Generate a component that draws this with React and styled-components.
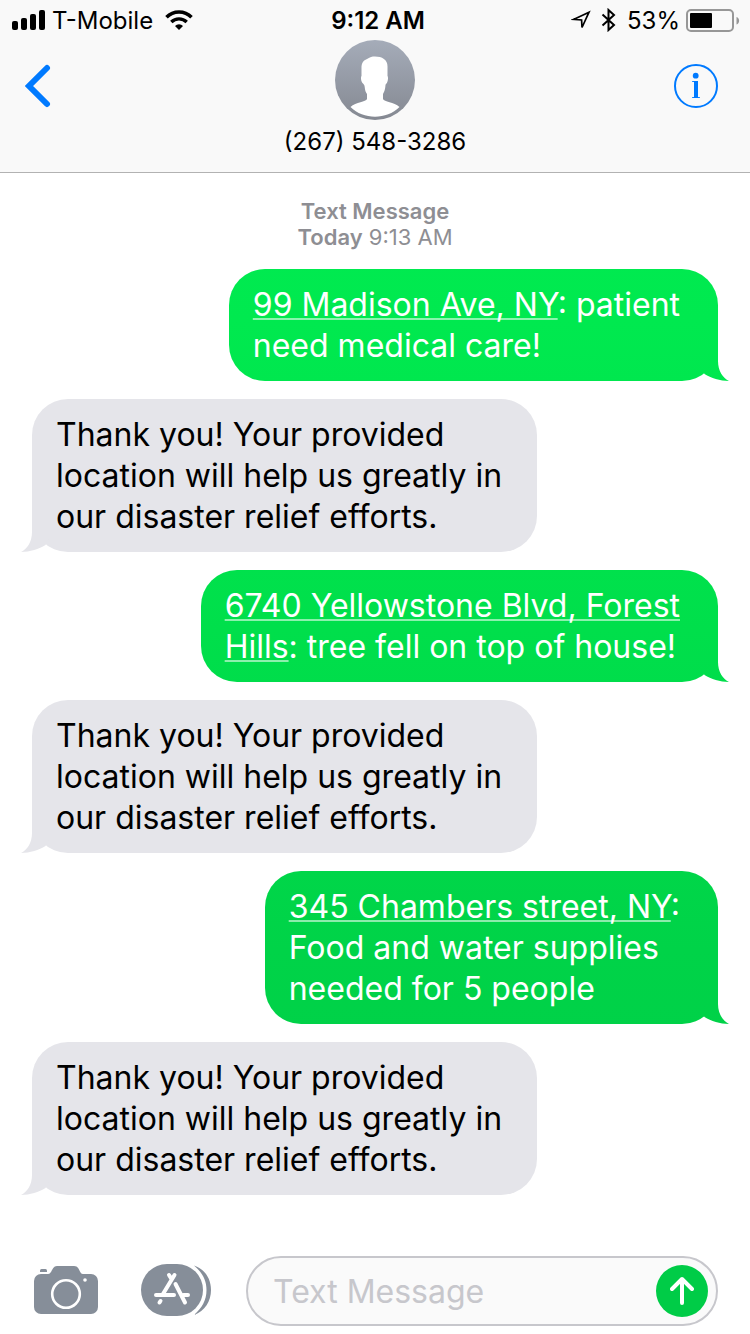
import React from 'react'
import styled, { createGlobalStyle, css } from 'styled-components'

const theme = {
  font: '"Inter", "Roboto", sans-serif',
  blue: '#007aff',
  bar: '#f9f9f9',
  line: '#b2b2b2',
  grey: '#8e8e93',
  icon: '#868e99',
  incoming: '#e5e5ea',
  outgoing: 'linear-gradient(#00ee52 0px, #00e94f 320px, #00df4b 630px, #00d348 950px, #00cc47 1334px) fixed',
  send: '#00cc47',
}

const REPLY = [
  [{ text: 'Thank you! Your provided' }],
  [{ text: 'location will help us greatly in' }],
  [{ text: 'our disaster relief efforts.' }],
]

const MESSAGES = [
  {
    id: 1,
    mine: true,
    lines: [
      [{ text: '99 Madison Ave, NY', address: true }, { text: ': patient' }],
      [{ text: 'need medical care!' }],
    ],
  },
  { id: 2, lines: REPLY },
  {
    id: 3,
    mine: true,
    lines: [
      [{ text: '6740 Yellowstone Blvd, Forest', address: true }],
      [{ text: 'Hills', address: true }, { text: ': tree fell on top of house!' }],
    ],
  },
  { id: 4, lines: REPLY },
  {
    id: 5,
    mine: true,
    lines: [
      [{ text: '345 Chambers street, NY', address: true }, { text: ':' }],
      [{ text: 'Food and water supplies' }],
      [{ text: 'needed for 5 people' }],
    ],
  },
  { id: 6, lines: REPLY },
]

function StatusBar() {
  return (
    <StatusBarStyled>
      <StatusGroup>
        <svg width="34" height="20" viewBox="0 0 34 20">
          <rect x="0" y="11" width="6" height="9" rx="2" />
          <rect x="9" y="8" width="6" height="12" rx="2" />
          <rect x="18" y="4" width="6" height="16" rx="2" />
          <rect x="27" y="0" width="6" height="20" rx="2" />
        </svg>
        <span>T-Mobile</span>
        <WifiIcon width="28" height="20" viewBox="0 0 28 20">
          <path d="M1.5 7.2A17.6 17.6 0 0 1 26.5 7.2" fill="none" stroke="#000" strokeWidth="3.6" />
          <path d="M6.3 12A11 11 0 0 1 21.7 12" fill="none" stroke="#000" strokeWidth="3.4" />
          <path d="M14 20L10 16A5.7 5.7 0 0 1 18 16Z" />
        </WifiIcon>
      </StatusGroup>
      <Clock>9:12 AM</Clock>
      <StatusGroup $end>
        <svg width="20" height="22" viewBox="0 0 20 22">
          <path d="M2.5 10.4L18 3.2L11 18.500L10.600 11Z" fill="none" stroke="#000" strokeWidth="1.7" />
        </svg>
        <BluetoothIcon width="16" height="24" viewBox="0 0 16 24">
          <path d="M1.5 6.5L13 17L7.5 22V2L13 7L1.5 17.5" fill="none" stroke="#000" strokeWidth="2" />
        </BluetoothIcon>
        <span>53%</span>
        <svg width="54" height="24" viewBox="0 0 54 24">
          <rect x="1" y="2" width="46" height="21" rx="4" fill="none" stroke="#979797" strokeWidth="2" />
          <rect x="4" y="5" width="22" height="15" rx="1" />
          <path d="M50.5 9C54 10 54 15.5 50.5 16.5Z" fill="#979797" />
        </svg>
      </StatusGroup>
    </StatusBarStyled>
  )
}

function ContactHeader() {
  return (
    <ContactHeaderStyled>
      <IconButton aria-label="Back">
        <svg width="26" height="44" viewBox="0 0 26 44">
          <path d="M22 4L4 22L22 40" fill="none" stroke={theme.blue} strokeWidth="6" strokeLinecap="round" />
        </svg>
      </IconButton>
      <Contact>
        <svg width="80" height="80" viewBox="0 0 80 80">
          <defs>
            <linearGradient id="avatar" x1="0" y1="0" x2="0" y2="1">
              <stop offset="0" stopColor="#a5acb9" />
              <stop offset="1" stopColor="#858992" />
            </linearGradient>
          </defs>
          <circle cx="40" cy="40" r="40" fill="url(#avatar)" />
          <path
            d="M40 16.5C47 16.5 52.5 19.5 52.5 26.5V36C53.5 37 53 42 51.5 43.5C50.5 44 50.5 45 50.3 47C50 50 49 52 48 54V59C49 62 59 62 64.5 67C58 73.5 49 76.7 40 76.7C31 76.7 22 73.5 15.5 67C21 62 31 62 32 59V54C30.5 52 30 50 29.7 47C29.5 45 29 44.5 28 43.5C26 42 25.5 37 26.5 36V26.5C27 21 30 20 32.5 18.7C35 17 37 16.5 40 16.5Z"
            fill="#fff"
          />
        </svg>
        <ContactName>(267) 548-3286</ContactName>
      </Contact>
      <IconButton aria-label="Details" $end>
        <svg width="44" height="44" viewBox="0 0 44 44">
          <circle cx="22" cy="22" r="21" fill="none" stroke={theme.blue} strokeWidth="2" />
          <circle cx="21.7" cy="11.7" r="2.9" fill={theme.blue} />
          <path d="M18 17H24V33L26 33.3V34H18V33.3L20 33V18L18 17.8Z" fill={theme.blue} />
        </svg>
      </IconButton>
    </ContactHeaderStyled>
  )
}

function Message({ mine, lines }) {
  return (
    <Bubble $mine={mine}>
      {lines.map((parts, i) => (
        <Line key={i}>
          {parts.map(({ text, address }) =>
            address ? <Address key={text} href="#">{text}</Address> : <span key={text}>{text}</span>
          )}
        </Line>
      ))}
    </Bubble>
  )
}

function Composer() {
  return (
    <ComposerStyled>
      <Tools>
        <IconButton aria-label="Camera">
          <svg width="64" height="48" viewBox="0 0 64 48">
            <path
              d="M7 8H14C18 8 18 0 23 0H40C46 0 45 8 49 8H57A7 7 0 0 1 64 15V41A7 7 0 0 1 57 48H7A7 7 0 0 1 0 41V15A7 7 0 0 1 7 8Z"
              fill={theme.icon}
            />
            <path d="M6 6V4.5Q6 3 7.5 3H11.5Q13 3 13 4.5V6Z" fill={theme.icon} />
            <circle cx="32" cy="28" r="13.8" fill="none" stroke="#fff" strokeWidth="2.6" />
            <circle cx="51" cy="14" r="1.8" fill="#fff" />
          </svg>
        </IconButton>
        <IconButton aria-label="App Store">
          <svg width="70" height="52" viewBox="0 0 70 52">
            <path d="M53 1.5C64 5 70 15 70 26S64 47 53 51C61 44 65.5 36 65.5 26S61 8 53 1.5Z" fill={theme.icon} />
            <rect width="62" height="52" rx="26" fill={theme.icon} />
            <g fill="none" stroke="#fff" strokeWidth="4" strokeLinecap="round">
              <path d="M33.500 11L22 30M15 31H33M28 11L30.500 15M19.500 37L18.500 38.500" />
              <path d="M34.500 20L44 38.500M42.500 31H47" />
            </g>
          </svg>
        </IconButton>
      </Tools>
      <Field>
        <input type="text" aria-label="Text Message" placeholder="Text Message" />
        <SendButton aria-label="Send">
          <svg width="24" height="30" viewBox="0 0 24 30">
            <path
              d="M12 27V3M2 13L12 3L22 13"
              fill="none"
              stroke="#fff"
              strokeWidth="4"
              strokeLinecap="round"
              strokeLinejoin="round"
            />
          </svg>
        </SendButton>
      </Field>
    </ComposerStyled>
  )
}

export default function App() {
  return (
    <Page>
      <GlobalStyle />
      <TopBar>
        <StatusBar />
        <ContactHeader />
      </TopBar>
      <Thread>
        <Stamp>
          <b>Text Message</b>
          <br />
          <b>Today</b> 9:13 AM
        </Stamp>
        {MESSAGES.map(({ id, mine, lines }) => (
          <Message key={id} mine={mine} lines={lines} />
        ))}
      </Thread>
      <Composer />
    </Page>
  )
}

const GlobalStyle = createGlobalStyle`
  * {
    box-sizing: border-box;
  }

  body {
    margin: 0;
    background: #fff;
    color: #000;
    font-family: ${theme.font};
  }

  button, input {
    font-family: inherit;
  }

  svg {
    display: block;
    flex-shrink: 0;
  }
`

const Page = styled.div`
  min-height: 100vh;
  display: flex;
  flex-direction: column;
`

const TopBar = styled.header`
  background: ${theme.bar};
  border-bottom: 1px solid ${theme.line};
`

const StatusBarStyled = styled.div`
  display: grid;
  grid-template-columns: 1fr auto 1fr;
  align-items: center;
  height: 40px;
  padding: 0 10px 0 12px;
  font-size: 24px;
`

const StatusGroup = styled.div`
  display: flex;
  align-items: center;
  gap: 6px;
  justify-content: ${({ $end }) => ($end ? 'flex-end' : 'flex-start')};
`

const Clock = styled.span`
  margin-left: 4px;
  font-weight: 600;
`

const WifiIcon = styled.svg`
  margin-left: 6px;
`

const BluetoothIcon = styled.svg`
  margin: 0 4px;
`

const ContactHeaderStyled = styled.div`
  display: grid;
  grid-template-columns: 1fr auto 1fr;
  align-items: start;
  padding: 0 32px 15px 25px;
`

const Contact = styled.div`
  display: flex;
  flex-direction: column;
  align-items: center;
  gap: 7px;
  margin-left: 7px;
`

const ContactName = styled.div`
  font-size: 24px;
  line-height: 30px;
`

const IconButton = styled.button`
  display: flex;
  padding: 0;
  border: 0;
  background: none;
  cursor: pointer;

  ${ContactHeaderStyled} & {
    margin-top: 24px;
    justify-self: ${({ $end }) => ($end ? 'end' : 'start')};
  }
`

const Thread = styled.main`
  display: flex;
  flex-direction: column;
  align-items: flex-start;
  gap: 18px;
  padding: 25px 32px 0;
`

const Stamp = styled.div`
  align-self: center;
  margin-bottom: 1px;
  color: ${theme.grey};
  font-size: 22px;
  line-height: 26px;
  text-align: center;

  b {
    font-weight: 600;
  }
`

const Bubble = styled.div`
  position: relative;
  padding: 15px 35px 15px 24px;
  border-radius: 36px;
  font-size: 32px;
  line-height: 41px;
  background: ${theme.incoming};

  &::after {
    content: '';
    position: absolute;
    bottom: 0;
    left: -12px;
    width: 60px;
    height: 40px;
    background: inherit;
    clip-path: path('M30 4H12V20C12 30 7 37 1 40C10 40 19 37 25.5 33L30 25Z');
  }

  ${({ $mine }) =>
    $mine &&
    css`
      align-self: flex-end;
      padding-right: 38px;
      color: #fff;
      background: ${theme.outgoing};

      &::after {
        left: auto;
        right: -12px;
        clip-path: path('M30 4H48V20C48 30 53 37 59 40C50 40 41 37 34.5 33L30 25Z');
      }
    `}
`

const Line = styled.div`
  white-space: nowrap;
`

const Address = styled.a`
  color: inherit;
  text-decoration: underline 2px rgba(255, 255, 255, 0.55);
  text-decoration-skip-ink: none;
  text-underline-offset: 2px;
`

const ComposerStyled = styled.footer`
  display: flex;
  align-items: center;
  gap: 35px;
  margin-top: auto;
  padding: 8px 32px 8px 34px;
`

const Tools = styled.div`
  display: flex;
  align-items: center;
  gap: 43px;
  padding-bottom: 2px;
`

const Field = styled.div`
  flex: 1;
  min-width: 0;
  display: flex;
  align-items: center;
  height: 70px;
  padding: 0 8px 0 25px;
  border: 2px solid #c7c7cc;
  border-radius: 35px;
  background: #fafafa;

  input {
    flex: 1;
    min-width: 0;
    padding: 0;
    border: 0;
    outline: 0;
    background: none;
    font-size: 32px;

    &::placeholder {
      color: #c7c7cc;
    }
  }
`

const SendButton = styled.button`
  display: flex;
  align-items: center;
  justify-content: center;
  width: 52px;
  height: 52px;
  padding: 0;
  border: 0;
  border-radius: 50%;
  background: ${theme.send};
  cursor: pointer;
`
